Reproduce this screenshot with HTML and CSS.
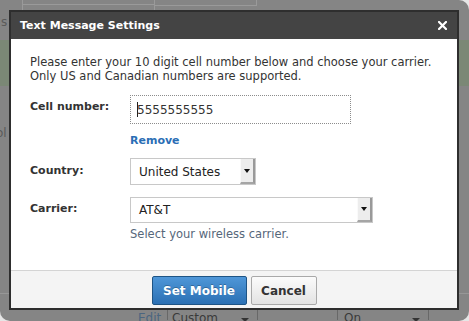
FILE: index.html
```html
<!DOCTYPE html>
<html lang="en">

<head>
  <meta charset="UTF-8">
  <meta name="viewport" content="width=device-width, initial-scale=1.0">
  <title>Text Message Settings</title>

  <link rel="stylesheet" href="styles.css">
</head>

<body>
  <div class="screen">
    <div class="backdrop">
      <div class="bg-top">
        <div class="bg-cell bg-first"></div>
        <div class="bg-cell bg-second"></div>
      </div>
      <div class="bg-s">s</div>
      <div class="bg-green"></div>
      <div class="bg-ol">ol</div>
      <div class="bg-line"></div>
      <div class="bg-bottom">
        <div class="bg-spacer"></div>
        <div class="bg-edit">Edit</div>
        <div class="bg-drop bg-custom">Custom<span class="bg-arrow"></span></div>
        <div class="bg-blank"></div>
        <div class="bg-drop bg-on">On<span class="bg-arrow"></span></div>
      </div>
    </div>

    <div class="dialog">
      <div class="dialog-head">
        <span class="dialog-title">Text Message Settings</span>
        <svg class="dialog-close" width="9" height="9" viewBox="0 0 9 9">
          <path d="M1 1 L8 8 M8 1 L1 8" stroke="#fff" stroke-width="2.2" stroke-linecap="square" />
        </svg>
      </div>

      <div class="dialog-body">
        <p class="intro">Please enter your 10 digit cell number below and choose your carrier.<br>Only US and Canadian numbers are supported.</p>

        <div class="form">
          <div class="row row-cell">
            <div class="label">Cell number:</div>
            <div class="text-input"><span class="caret"></span>5555555555</div>
          </div>
          <a class="remove" href="#">Remove</a>

          <div class="row row-country">
            <div class="label">Country:</div>
            <div class="select select-country">
              <span class="select-text">United States</span>
              <span class="select-btn"><span class="select-arrow"></span></span>
            </div>
          </div>

          <div class="row row-carrier">
            <div class="label">Carrier:</div>
            <div class="select select-carrier">
              <span class="select-text">AT&amp;T</span>
              <span class="select-btn"><span class="select-arrow"></span></span>
            </div>
          </div>
          <div class="hint">Select your wireless carrier.</div>
        </div>
      </div>

      <div class="dialog-foot">
        <button class="btn btn-primary">Set Mobile</button>
        <button class="btn btn-cancel">Cancel</button>
      </div>
    </div>
  </div>
</body>

</html>
```

FILE: styles.css
```css
* {
  box-sizing: border-box;
}

html,
body {
  height: 100%;
}

body {
  margin: 0;
  background: #e6e6e6;
  font-family: "DejaVu Sans", sans-serif;
  overflow: hidden;
}

.screen {
  position: relative;
  width: 469px;
  height: 321px;
  background: #858585;
  border-radius: 0 10px 10px 10px;
  overflow: hidden;
}

/* dimmed page behind the dialog */
.backdrop {
  height: 100%;
  color: #3a3a3a;
  font-size: 12px;
}

.bg-top {
  display: flex;
  height: 10px;
}

.bg-cell {
  height: 10px;
}

.bg-first {
  width: 133px;
  margin-left: 22px;
  border-left: 1px solid #9a9a9a;
  border-right: 1px solid #9a9a9a;
  background: linear-gradient(to bottom, transparent 4px, #9a9a9a 4px, #9a9a9a 5px, transparent 5px);
}

.bg-second {
  width: 102px;
  height: 6px;
  border-right: 1px solid #9a9a9a;
  background: linear-gradient(to bottom, transparent 5px, #9a9a9a 5px);
}

.bg-s {
  height: 14px;
  margin-top: 5px;
  padding-left: 1px;
  line-height: 14px;
  color: #5a5a5a;
}

.bg-green {
  height: 46px;
  margin-top: 11px;
  background: #7b8876;
}

.bg-ol {
  height: 14px;
  margin-top: 40px;
  margin-left: -4px;
  line-height: 14px;
  color: #5a5a5a;
}

.bg-line {
  height: 1px;
  margin-top: 153px;
  background: #979797;
}

.bg-bottom {
  display: flex;
  height: 12px;
  margin-top: 14px;
  line-height: 14px;
}

.bg-spacer {
  width: 138px;
}

.bg-edit {
  width: 30px;
  padding-top: 3px;
  color: #4b6580;
  border-right: 1px solid #686868;
}

.bg-drop {
  display: flex;
  justify-content: space-between;
  padding: 3px 8px 0 4px;
  border-right: 1px solid #686868;
}

.bg-custom {
  width: 90px;
}

.bg-blank {
  width: 80px;
  border-right: 1px solid #686868;
}

.bg-on {
  width: 91px;
  padding-left: 6px;
}

.bg-arrow {
  width: 0;
  height: 0;
  margin-top: 7px;
  border-left: 4px solid transparent;
  border-right: 4px solid transparent;
  border-top: 4px solid #333;
}

/* dialog */
.dialog {
  position: absolute;
  left: 9px;
  top: 10px;
  width: 450px;
  height: 300px;
  display: flex;
  flex-direction: column;
  background: #fff;
  border: 2px solid #2e2e2e;
  color: #333;
}

.dialog-head {
  display: flex;
  align-items: center;
  justify-content: space-between;
  height: 27px;
  padding: 0 10px 0 9px;
  background: #444;
  color: #fff;
  font-size: 11px;
  font-weight: bold;
}

.dialog-close {
  display: block;
}

.dialog-body {
  flex: 1;
  padding: 16px 19px 0;
  font-size: 11px;
  line-height: 14px;
}

.intro {
  margin: 0;
  font-size: 11.5px;
}

.form {
  display: flex;
  flex-direction: column;
  margin-top: 12px;
}

.row {
  display: flex;
}

.label {
  width: 100px;
  font-weight: bold;
  padding-top: 5px;
}

.row-country .label {
  padding-top: 6px;
}

.text-input {
  display: flex;
  align-items: center;
  width: 221px;
  height: 29px;
  padding-left: 6px;
  border: 1px dotted #8c8c8c;
  font-size: 12px;
  color: #333;
}

.caret {
  width: 1px;
  height: 15px;
  margin-right: -1px;
  background: #222;
}

.remove {
  align-self: flex-start;
  margin: 10px 0 0 100px;
  color: #2a6eb5;
  font-weight: bold;
  text-decoration: none;
}

.row-country {
  margin-top: 10px;
}

.row-carrier {
  margin-top: 12px;
}

.select {
  display: flex;
  border: 1px solid #c8c8c8;
  background: #fff;
  font-size: 12px;
}

.select-country {
  width: 126px;
  height: 27px;
}

.select-carrier {
  width: 243px;
  height: 26px;
}

.select-text {
  flex: 1;
  display: flex;
  align-items: center;
  padding-left: 8px;
  color: #222;
}

.select-btn {
  display: flex;
  align-items: center;
  justify-content: center;
  width: 15px;
  background: #ededed;
  border-left: 1px solid #fafafa;
  border-right: 2px solid #999;
  border-bottom: 2px solid #a5a5a5;
}

.select-arrow {
  width: 0;
  height: 0;
  border-left: 3px solid transparent;
  border-right: 3px solid transparent;
  border-top: 4px solid #111;
}

.hint {
  margin: 4px 0 0 100px;
  font-size: 11.5px;
  color: #56677a;
}

.dialog-foot {
  display: flex;
  justify-content: center;
  gap: 4px;
  height: 38px;
  padding-top: 5px;
  background: #f4f4f4;
  border-top: 1px solid #d4d4d4;
}

.btn {
  height: 29px;
  padding: 0;
  font-family: "DejaVu Sans", sans-serif;
  font-size: 12px;
  font-weight: bold;
  border-radius: 2px;
}

.btn-primary {
  width: 95px;
  color: #fff;
  background: linear-gradient(to bottom, #4f97d8, #2b70b4);
  border: 1px solid #1e5485;
  text-shadow: 0 -1px 0 rgba(0, 0, 0, .25);
}

.btn-cancel {
  width: 66px;
  color: #333;
  background: linear-gradient(to bottom, #fbfbfb, #e3e3e3);
  border: 1px solid #a9a9a9;
}
```
